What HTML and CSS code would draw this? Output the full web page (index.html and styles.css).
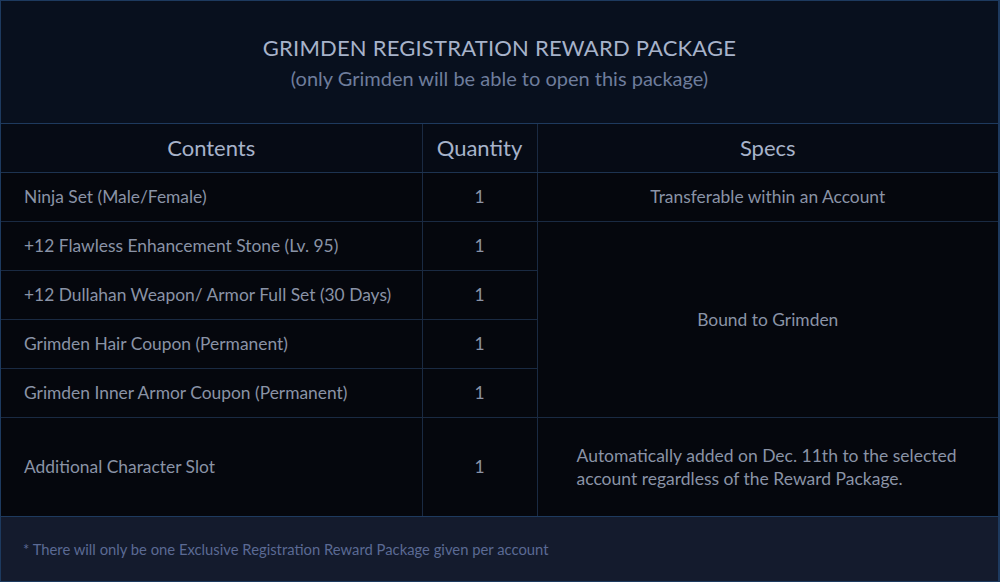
FILE: index.html
```html
<!DOCTYPE html>
<html>
<head>
<meta charset="utf-8">
<link rel="stylesheet" href="styles.css">
</head>
<body>
<div class="panel">
  <header class="top">
    <h1 class="title">GRIMDEN REGISTRATION REWARD PACKAGE</h1>
    <p class="sub">(only Grimden will be able to open this package)</p>
  </header>
  <table class="grid">
    <colgroup>
      <col class="c1"><col class="c2"><col class="c3">
    </colgroup>
    <thead>
      <tr><th>Contents</th><th>Quantity</th><th class="specs-h">Specs</th></tr>
    </thead>
    <tbody>
      <tr><td class="name">Ninja Set (Male/Female)</td><td class="qty">1</td><td class="spec">Transferable within an Account</td></tr>
      <tr><td class="name">+12 Flawless Enhancement Stone (Lv. 95)</td><td class="qty">1</td><td class="spec" rowspan="4">Bound to Grimden</td></tr>
      <tr><td class="name">+12 Dullahan Weapon/ Armor Full Set (30 Days)</td><td class="qty">1</td></tr>
      <tr><td class="name">Grimden Hair Coupon (Permanent)</td><td class="qty">1</td></tr>
      <tr><td class="name">Grimden Inner Armor Coupon (Permanent)</td><td class="qty">1</td></tr>
      <tr class="tall"><td class="name">Additional Character Slot</td><td class="qty">1</td><td class="spec left">Automatically added on Dec. 11th to the selected account regardless of the Reward Package.</td></tr>
    </tbody>
  </table>
  <footer class="foot">* There will only be one Exclusive Registration Reward Package given per account</footer>
</div>
</body>
</html>
```
FILE: styles.css
```css
html, body {
  margin: 0;
  padding: 0;
  background: #05070d;
}
body {
  font-family: Lato, "Open Sans", sans-serif;
}
.panel {
  width: 1000px;
  height: 582px;
  box-sizing: border-box;
  border: 1px solid #1d3a5f;
  border-right-width: 2px;
  display: flex;
  flex-direction: column;
  background: #05070d;
}
.top {
  height: 123px;
  flex: none;
  background: #08101e;
  border-bottom: 1px solid #1e3a5e;
  display: flex;
  flex-direction: column;
  align-items: center;
  justify-content: center;
  padding-top: 1px;
  box-sizing: border-box;
}
.title {
  margin: 0;
  font-weight: 400;
  font-size: 22px;
  line-height: 30px;
  color: #a7b3ca;
  letter-spacing: 0.2px;
}
.sub {
  margin: 0;
  font-size: 20px;
  line-height: 30px;
  color: #6e7d9c;
}
.grid {
  width: 100%;
  border-collapse: collapse;
  table-layout: fixed;
  flex: none;
}
.c1 { width: 421px; }
.c2 { width: 115px; }
.c3 { width: auto; }
.grid th, .grid td {
  border: 1px solid #1a2a42;
  padding: 0;
  font-weight: 400;
  line-height: 20px;
}
.grid tr > :first-child { border-left: none; }
.grid tr > :last-child { border-right: none; }
.grid thead tr > th { border-top: none; }
.grid th {
  height: 48px;
  background: #060b15;
  color: #a7b3ca;
  font-size: 22px;
  text-align: center;
  border-bottom-color: #1d3350;
}
.grid th.specs-h { vertical-align: middle; line-height: 16px; }
.grid td {
  height: 48px;
  font-size: 17.4px;
  color: #8a93a6;
  background: #05070d;
}
.grid tr.tall td { height: 98px; }
.name { padding-left: 23px !important; }
.qty { text-align: center; }
.spec { text-align: center; }
.spec.left {
  text-align: left;
  padding-left: 39px !important;
  padding-right: 20px !important;
  font-size: 17.5px;
  line-height: 23px;
}
.grid tbody tr:last-child td { border-bottom: 1px solid #1e3a5e; }
.foot {
  flex: 1;
  background: #141b2d;
  color: #5b6a94;
  font-size: 14.8px;
  display: flex;
  align-items: center;
  padding-left: 22px;
}
```
